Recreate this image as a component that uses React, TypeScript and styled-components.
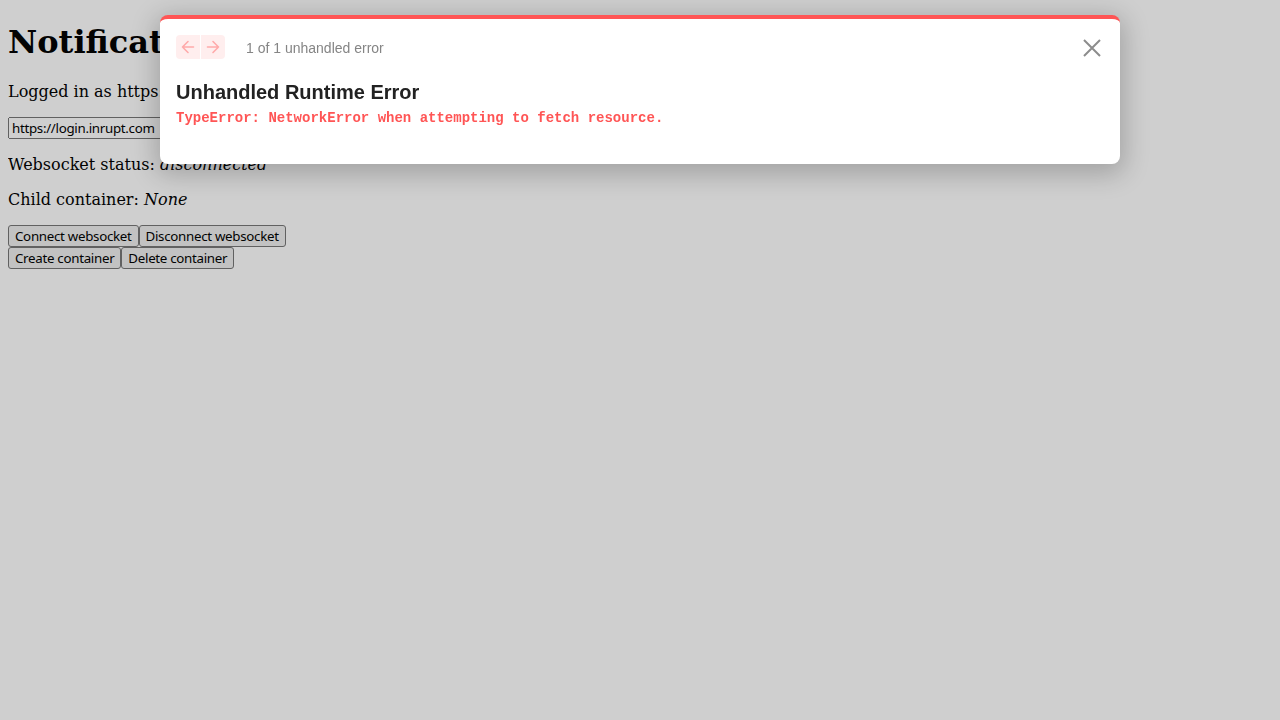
import React from 'react'
import styled, { createGlobalStyle } from 'styled-components'

const GlobalStyle = createGlobalStyle`
    body {
        margin: 8px;
        font-family: "DejaVu Serif", serif;
        background: #ffffff;
        color: #000000;
    }
`

const Title = styled.h1`
    font-size: 32px;
    margin: 15px 0 21.44px;
`

const Line = styled.p`
    margin: 16px 0;
`

const UrlInput = styled.input`
    font-family: "Noto Sans", sans-serif;
    font-size: 13.33px;
    line-height: 16px;
    letter-spacing: -0.3px;
    width: 220px;
`

const Row = styled.div`
    display: flex;
`

const Button = styled.button`
    font-family: "Noto Sans", sans-serif;
    font-size: 13.33px;
    line-height: 16px;
    letter-spacing: -0.3px;
    padding: 2px 6px;
    border: 1px solid #767676;
    border-radius: 3px;
    background: #efefef;
    color: #000000;
`

const Backdrop = styled.div`
    position: fixed;
    inset: 0;
    background: rgba(17, 17, 17, 0.2);
    display: flex;
    justify-content: center;
    align-items: flex-start;
    padding-top: 15px;
`

const Dialog = styled.div`
    width: 960px;
    background: #ffffff;
    border-top: 4px solid #ff5555;
    border-radius: 8px;
    box-shadow: 0 6px 26px 4px rgba(0, 0, 0, 0.22);
    padding: 16px 16px 0;
    box-sizing: border-box;
    font-family: "Liberation Sans", Arial, sans-serif;
`

const Header = styled.div`
    display: flex;
    align-items: center;
    height: 24px;
`

const NavGroup = styled.div`
    display: flex;
    gap: 1px;
    margin-right: 21px;
`

const NavButton = styled.button<{ side: 'left' | 'right' }>`
    width: 24px;
    height: 24px;
    padding: 0;
    border: none;
    background: #ffeeee;
    color: #ffaaaa;
    display: flex;
    align-items: center;
    justify-content: center;
    border-radius: ${p => (p.side === 'left' ? '4px 0 0 4px' : '0 4px 4px 0')};
`

const Count = styled.span`
    font-size: 14px;
    color: #858585;
    flex: 1;
    padding-top: 2px;
`

const Close = styled.button`
    border: none;
    background: none;
    padding: 0;
    width: 24px;
    height: 24px;
    color: #8c8c8c;
    display: flex;
    margin-top: 2px;
`

const ErrorTitle = styled.h1`
    font-size: 20px;
    line-height: 24px;
    font-weight: 700;
    color: #222222;
    margin: 21px 0 0;
`

const ErrorMessage = styled.p`
    font-family: "Liberation Mono", monospace;
    font-weight: 700;
    font-size: 14px;
    line-height: 20px;
    color: #ff5555;
    margin: 4px 0 0;
    padding-bottom: 36px;
`

const Arrow = ({ dir }: { dir: 'left' | 'right' }) => (
    <svg width="14" height="14" viewBox="0 0 14 14" fill="none">
        {dir === 'left'
            ? <path d="M7 1.5L1.5 7L7 12.5M1.5 7H12.5" stroke="currentColor" strokeWidth="1.6" strokeLinecap="round" strokeLinejoin="round" />
            : <path d="M7 1.5L12.5 7L7 12.5M12.5 7H1.5" stroke="currentColor" strokeWidth="1.6" strokeLinecap="round" strokeLinejoin="round" />}
    </svg>
)

const App = () => {
    return (
        <>
            <GlobalStyle />
            <Title>Notifications demo</Title>
            <Line>Logged in as https://id.inrupt.com/demo</Line>
            <div>
                <UrlInput defaultValue="https://login.inrupt.com" />
            </div>
            <Line>Websocket status: <em>disconnected</em></Line>
            <Line>Child container: <em>None</em></Line>
            <Row>
                <Button>Connect websocket</Button>
                <Button>Disconnect websocket</Button>
            </Row>
            <Row>
                <Button>Create container</Button>
                <Button>Delete container</Button>
            </Row>
            <Backdrop>
                <Dialog>
                    <Header>
                        <NavGroup>
                            <NavButton side="left"><Arrow dir="left" /></NavButton>
                            <NavButton side="right"><Arrow dir="right" /></NavButton>
                        </NavGroup>
                        <Count>1 of 1 unhandled error</Count>
                        <Close>
                            <svg width="24" height="24" viewBox="0 0 24 24" fill="none">
                                <path d="M4 4L20 20M20 4L4 20" stroke="currentColor" strokeWidth="2" />
                            </svg>
                        </Close>
                    </Header>
                    <ErrorTitle>Unhandled Runtime Error</ErrorTitle>
                    <ErrorMessage>TypeError: NetworkError when attempting to fetch resource.</ErrorMessage>
                </Dialog>
            </Backdrop>
        </>
    )
}

export default App
